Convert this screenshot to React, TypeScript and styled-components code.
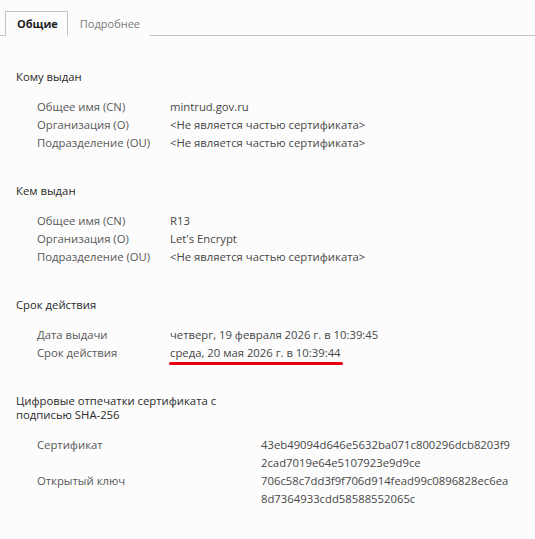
import styled, { createGlobalStyle } from 'styled-components';

const GlobalStyle = createGlobalStyle`
  html, body {
    margin: 0;
    padding: 0;
    background: #fcfcfc;
  }
  body {
    font-family: "Open Sans", "Noto Sans", "Liberation Sans", sans-serif;
    font-size: 11.3px;
    color: #444;
  }
`;

type Row = { label: string; value: string[]; marked?: boolean };
type Section = { title: string[]; rows: Row[]; wide?: boolean };

const notPart = '<Не является частью сертификата>';

const sections: Section[] = [
  {
    title: ['Кому выдан'],
    rows: [
      { label: 'Общее имя (CN)', value: ['mintrud.gov.ru'] },
      { label: 'Организация (O)', value: [notPart] },
      { label: 'Подразделение (OU)', value: [notPart] },
    ],
  },
  {
    title: ['Кем выдан'],
    rows: [
      { label: 'Общее имя (CN)', value: ['R13'] },
      { label: 'Организация (O)', value: ["Let's Encrypt"] },
      { label: 'Подразделение (OU)', value: [notPart] },
    ],
  },
  {
    title: ['Срок действия'],
    rows: [
      { label: 'Дата выдачи', value: ['четверг, 19 февраля 2026 г. в 10:39:45'] },
      { label: 'Срок действия', value: ['среда, 20 мая 2026 г. в 10:39:44'], marked: true },
    ],
  },
  {
    title: ['Цифровые отпечатки сертификата с', 'подписью SHA-256'],
    wide: true,
    rows: [
      {
        label: 'Сертификат',
        value: ['43eb49094d646e5632ba071c800296dcb8203f9', '2cad7019e64e5107923e9d9ce'],
      },
      {
        label: 'Открытый ключ',
        value: ['706c58c7dd3f9f706d914fead99c0896828ec6ea', '8d7364933cdd58588552065c'],
      },
    ],
  },
];

export default function App() {
  return (
    <>
      <GlobalStyle />
      <Page>
        <TabBar>
          <Tab $active>Общие</Tab>
          <Tab>Подробнее</Tab>
        </TabBar>
        <Content>
          {sections.map((section) => (
            <Block key={section.title[0]}>
              <Heading>
                {section.title.map((line) => (
                  <div key={line}>{line}</div>
                ))}
              </Heading>
              <Table>
                {section.rows.map((row) => (
                  <RowLine key={row.label} $wide={section.wide}>
                    <Label>{row.label}</Label>
                    <Value>
                      {row.value.map((line) =>
                        row.marked ? (
                          <Marked key={line}>{line}</Marked>
                        ) : (
                          <div key={line}>{line}</div>
                        )
                      )}
                    </Value>
                  </RowLine>
                ))}
              </Table>
            </Block>
          ))}
        </Content>
      </Page>
    </>
  );
}

const Page = styled.div`
  width: 535px;
  height: 539px;
  overflow: hidden;
`;

const TabBar = styled.div`
  display: flex;
  align-items: flex-end;
  height: 36px;
  padding-left: 5px;
  border-bottom: 1px solid #c4c4c4;
  box-sizing: border-box;
`;

const Tab = styled.div<{ $active?: boolean }>`
  height: 25px;
  box-sizing: border-box;
  display: flex;
  align-items: center;
  padding: 0 9px 0 11px;
  margin-bottom: -1px;
  font-size: 11px;
  font-weight: ${(p) => (p.$active ? 700 : 400)};
  color: ${(p) => (p.$active ? '#1e1e1e' : '#7a7a7a')};
  background: #fcfcfc;
  border: 1px solid ${(p) => (p.$active ? '#c4c4c4' : 'transparent')};
  border-bottom: 1px solid ${(p) => (p.$active ? '#fcfcfc' : 'transparent')};
`;

const Content = styled.div`
  padding: 34px 0 0 16px;
`;

const Block = styled.section`
  margin-bottom: 32px;
`;

const Heading = styled.div`
  color: #2a2a2a;
  line-height: 14px;
  margin-bottom: 14px;
`;

const Table = styled.div`
  display: flex;
  flex-direction: column;
  padding-left: 21px;
`;

const RowLine = styled.div<{ $wide?: boolean }>`
  display: grid;
  grid-template-columns: ${(p) => (p.$wide ? '224px' : '133px')} 1fr;
  line-height: 18px;
`;

const Label = styled.div`
  color: #585858;
  white-space: nowrap;
`;

const Value = styled.div`
  color: #474747;
  white-space: nowrap;
`;

const Marked = styled.span`
  position: relative;
  display: inline-block;

  &::after {
    content: '';
    position: absolute;
    left: -1px;
    right: -2px;
    bottom: -3px;
    height: 3px;
    border-radius: 2px;
    background: #e40010;
  }
`;
